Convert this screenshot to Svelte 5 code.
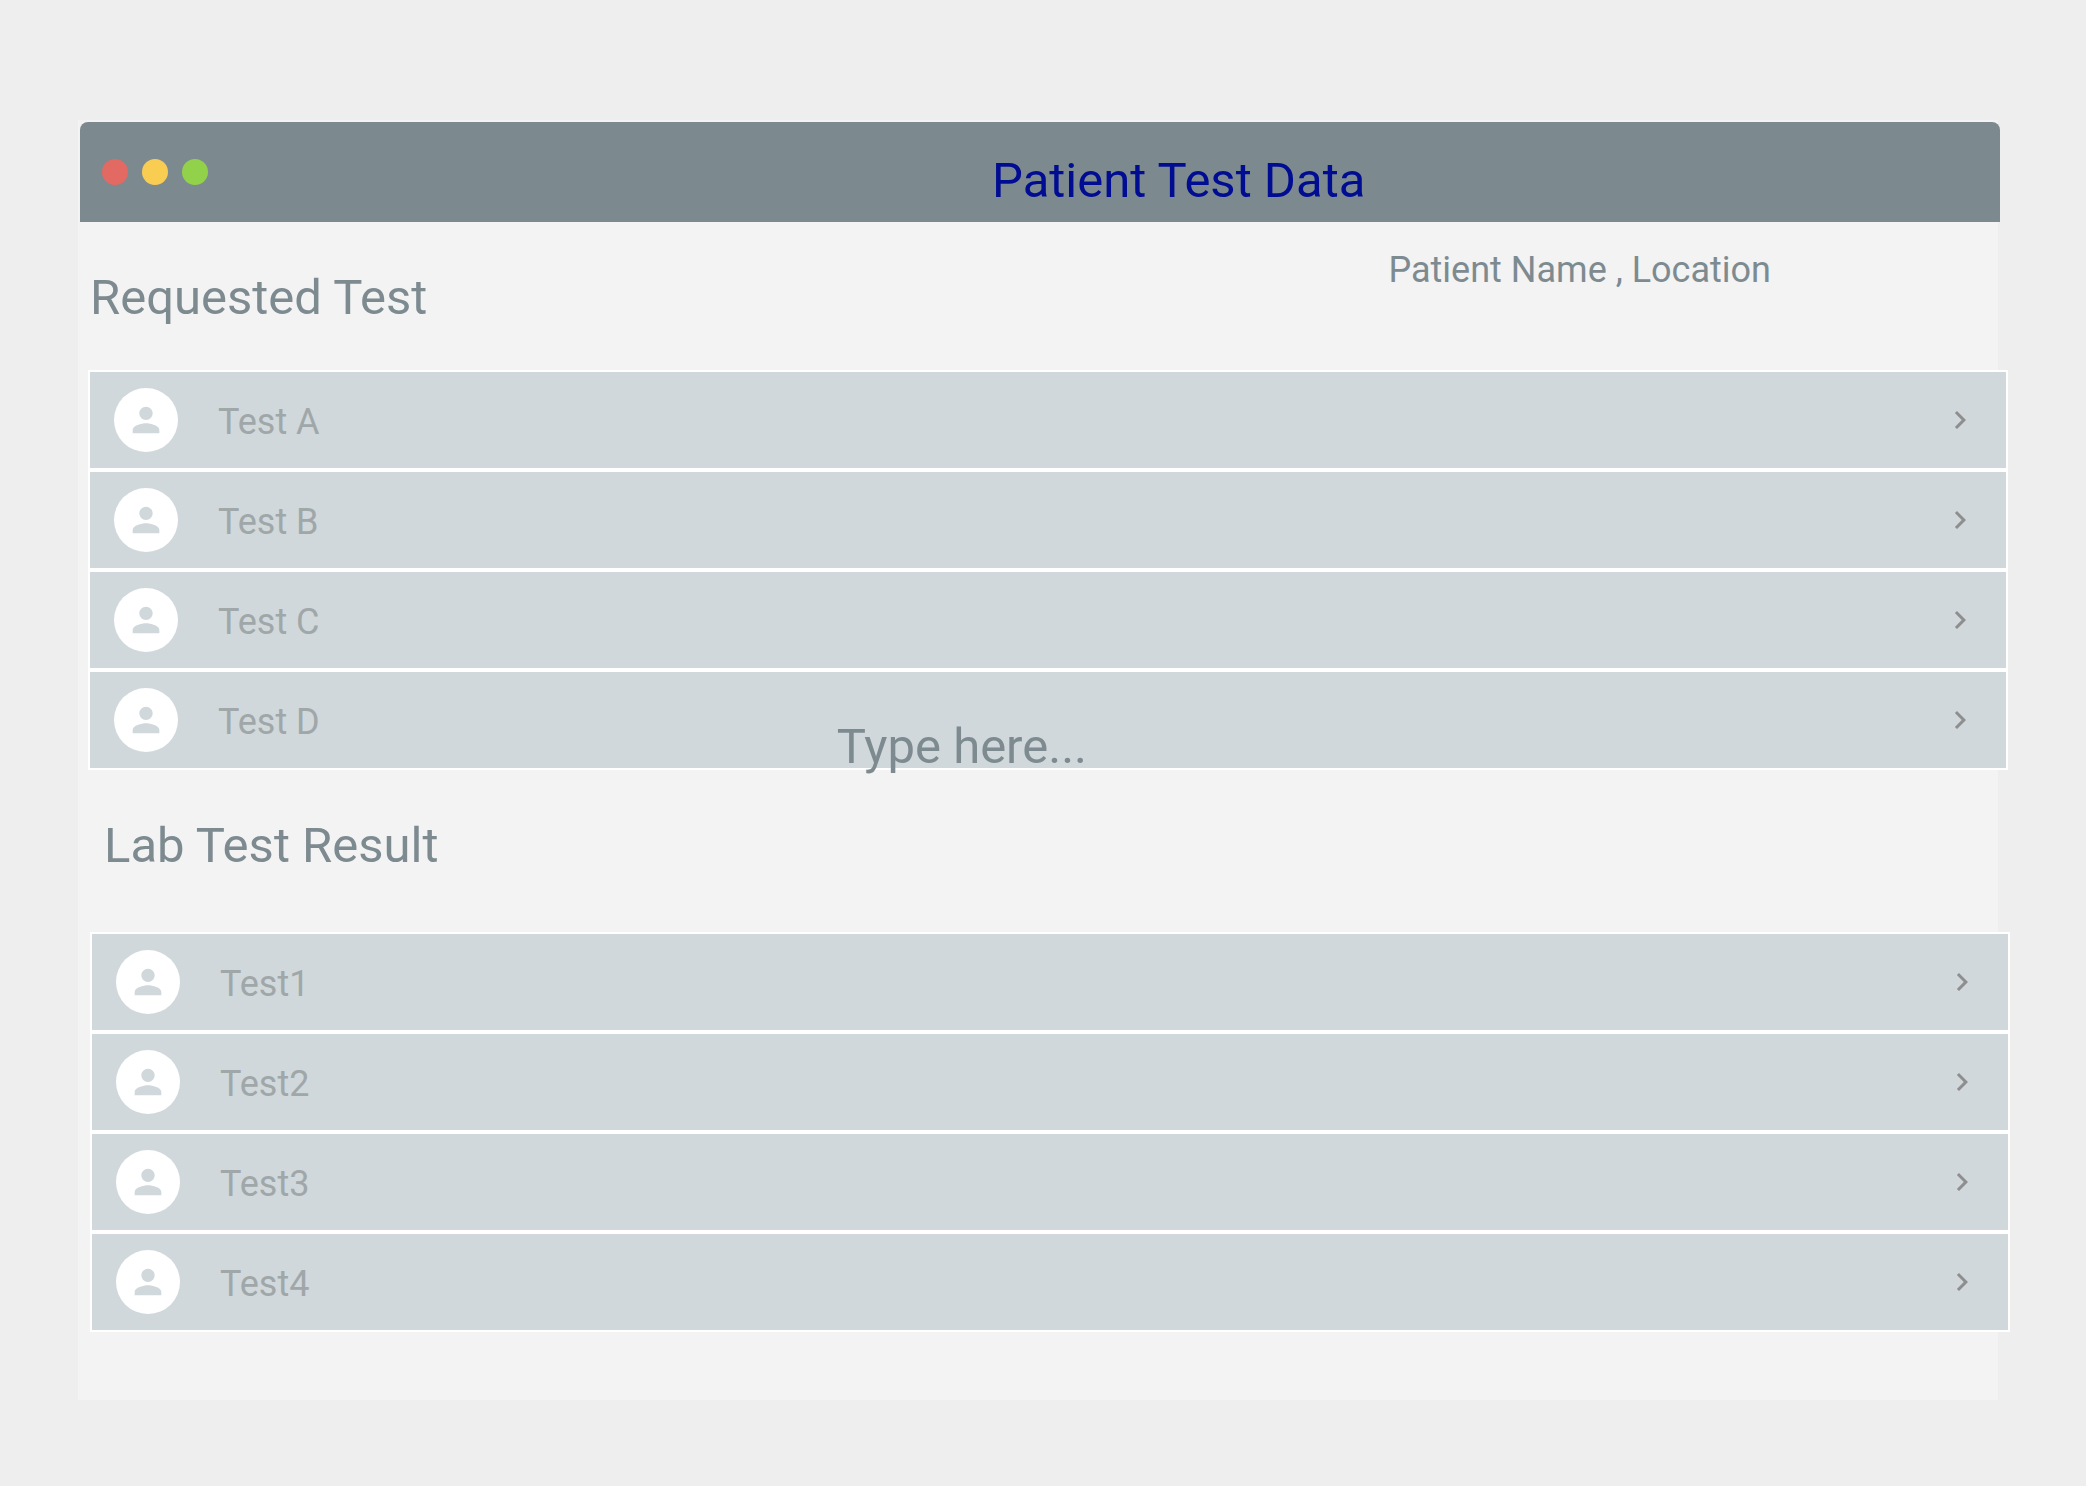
<script>
  const requested = ['Test A', 'Test B', 'Test C', 'Test D'];
  const results = ['Test1', 'Test2', 'Test3', 'Test4'];
</script>

{#snippet rows(items)}
  {#each items as item}
    <li>
      <button class="row" type="button">
        <span class="avatar">
          <svg viewBox="0 0 24 24" aria-hidden="true">
            <path d="M12 12c2.21 0 4-1.79 4-4s-1.79-4-4-4-4 1.79-4 4 1.79 4 4 4zm0 2c-2.67 0-8 1.34-8 4v2h16v-2c0-2.66-5.33-4-8-4z" />
          </svg>
        </span>
        <span class="label">{item}</span>
        <svg class="chevron" viewBox="0 0 24 24" aria-hidden="true">
          <path d="M10 6L8.59 7.41 13.17 12l-4.58 4.59L10 18l6-6z" />
        </svg>
      </button>
    </li>
  {/each}
{/snippet}

<main class="window">
  <header class="titlebar">
    <div class="dots">
      <span class="dot close"></span>
      <span class="dot minimize"></span>
      <span class="dot expand"></span>
    </div>
    <h1>Patient Test Data</h1>
  </header>

  <section class="requested">
    <div class="heading">
      <h2>Requested Test</h2>
      <p>Patient Name , Location</p>
    </div>
    <ul>
      {@render rows(requested)}
    </ul>
    <input class="note" type="text" placeholder="Type here..." aria-label="Note" />
  </section>

  <section class="results">
    <div class="heading">
      <h2>Lab Test Result</h2>
    </div>
    <ul>
      {@render rows(results)}
    </ul>
  </section>
</main>

<style>
  :global(body) {
    margin: 0;
    background: #eeeeee;
  }

  .window {
    margin: 120px 88px 86px 78px;
    padding: 2px 0 68px;
    display: flow-root;
    background: #f3f3f3;
    font-family: Roboto, 'Liberation Sans', sans-serif;
    color: #7d8b91;
  }

  h1,
  h2,
  p,
  ul {
    margin: 0;
    padding: 0;
    font-weight: 400;
  }

  .titlebar {
    display: grid;
    grid-template-columns: 47.5% 1fr;
    align-items: center;
    height: 100px;
    margin: 0 -2px 0 2px;
    border-radius: 8px 8px 0 0;
    background: #7c8a90;
  }

  .dots {
    display: flex;
    gap: 14px;
    padding-left: 22px;
  }

  .dot {
    width: 26px;
    height: 26px;
    border-radius: 50%;
  }

  .close {
    background: #e36963;
  }

  .minimize {
    background: #f9cd52;
  }

  .expand {
    background: #92d14a;
  }

  h1,
  h2 {
    font-size: 49px;
    line-height: 56px;
  }

  h1 {
    padding-top: 18px;
    color: #000c91;
  }

  .requested {
    position: relative;
    margin: 0 -10px 0 10px;
  }

  .results {
    margin: 0 -12px 0 12px;
  }

  .heading {
    display: grid;
    grid-template-columns: 67.7% 1fr;
    align-items: start;
  }

  .requested .heading {
    height: 100px;
    padding: 48px 0 0 2px;
  }

  .results .heading {
    height: 114px;
    padding: 48px 0 0 14px;
  }

  .heading p {
    margin-top: -22px;
    font-size: 36px;
    line-height: 44px;
  }

  ul {
    list-style: none;
  }

  .row {
    display: flex;
    align-items: center;
    box-sizing: border-box;
    width: 100%;
    height: 100px;
    padding: 0 28px 0 24px;
    border: 2px solid #ffffff;
    border-radius: 0;
    background: #d0d8db;
    font: inherit;
    color: #a0a7a9;
    text-align: left;
  }

  .avatar {
    display: grid;
    place-items: center;
    width: 64px;
    height: 64px;
    border-radius: 50%;
    background: #ffffff;
  }

  .avatar svg {
    width: 40px;
    height: 40px;
    fill: #d0d8db;
  }

  .label {
    flex: 1;
    margin-left: 40px;
    padding-top: 4px;
    font-size: 36px;
    line-height: 44px;
  }

  .chevron {
    width: 36px;
    height: 36px;
    fill: #8e8e8e;
  }

  .note {
    position: absolute;
    bottom: -6px;
    left: 39%;
    width: 320px;
    height: 60px;
    padding: 0;
    border: 0;
    outline: 0;
    background: transparent;
    font: inherit;
    font-size: 49px;
    color: #7d8b91;
  }

  .note::placeholder {
    color: #7d8b91;
    opacity: 1;
  }
</style>
